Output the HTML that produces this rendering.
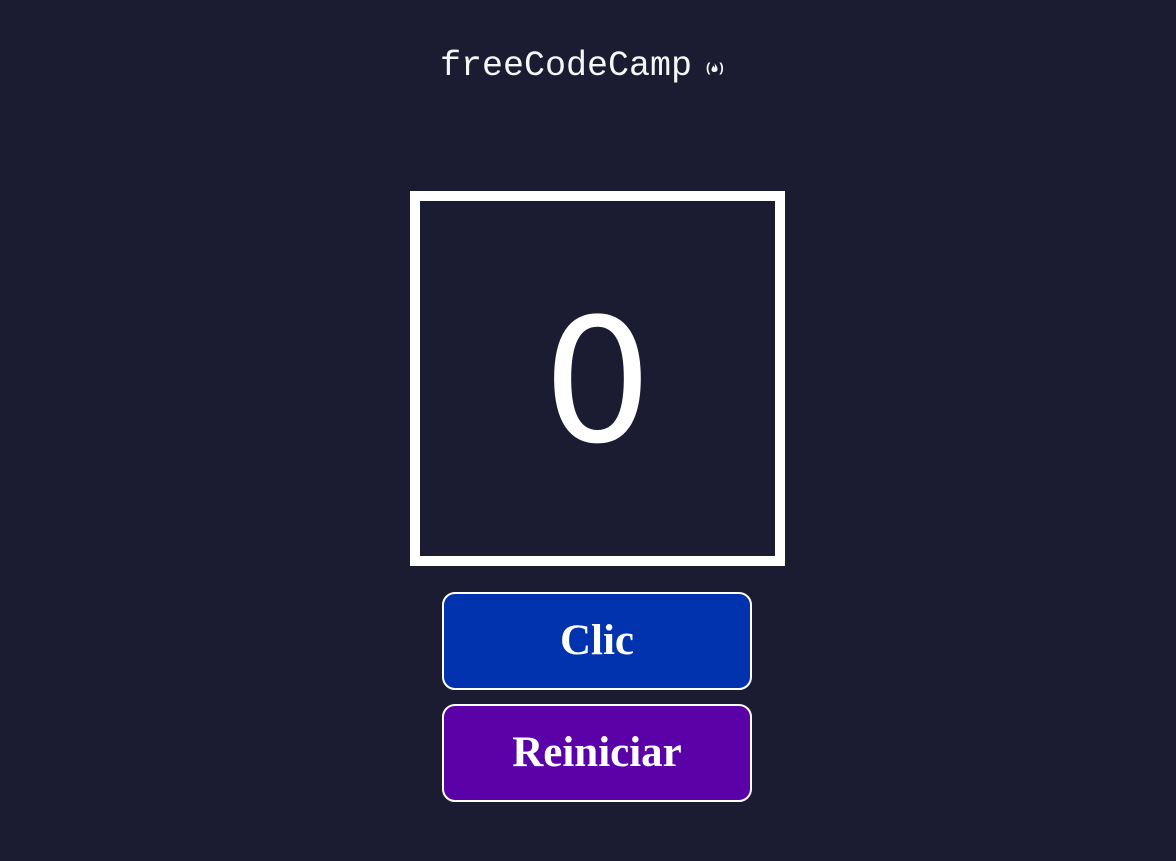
<!DOCTYPE html>
<html><head><style>
html,body{margin:0;padding:0;background:#1b1b32;width:1176px;height:861px;overflow:hidden}
.logo{position:absolute;left:440px;top:44px;font-family:"Liberation Mono",monospace;font-size:35px;color:#f5f6f7;letter-spacing:0px;line-height:44px}
.fire{position:absolute;left:706px;top:60px;font-family:"Liberation Sans",sans-serif;font-size:13px;color:#f5f6f7;font-weight:bold}
.box{position:absolute;left:410px;top:191px;width:355px;height:355px;border:10px solid #fff;}
.num{position:absolute;left:0;right:0;top:95px;text-align:center;font-family:"DejaVu Sans",sans-serif;font-size:172px;line-height:172px;color:#fff}
.btn{position:absolute;left:442px;width:306px;height:94px;border:2px solid #fff;border-radius:13px;color:#fff;font-family:"Liberation Serif",serif;font-weight:bold;font-size:43px;text-align:center;line-height:94px}
</style></head><body>
<div class="logo">freeCodeCamp</div>
<div class="fire">(<svg width="9" height="11" viewBox="0 0 9 11" style="vertical-align:-1px"><path d="M4.5 1 C6 3.5 8 5 7.5 8 C7 9.5 5.5 10 4.5 10 C3 10 1.5 9.5 1.5 7.5 C1.5 6 3 5 3 3.5 C4 4.5 4.5 5 4.5 6 C5 5 5 3 4.5 1Z" fill="#f5f6f7"/></svg>)</div>
<div class="box"><div class="num">0</div></div>
<div class="btn" style="top:592px;background:#0033ad">Clic</div>
<div class="btn" style="top:704px;background:#5a01a7">Reiniciar</div>
</body></html>
